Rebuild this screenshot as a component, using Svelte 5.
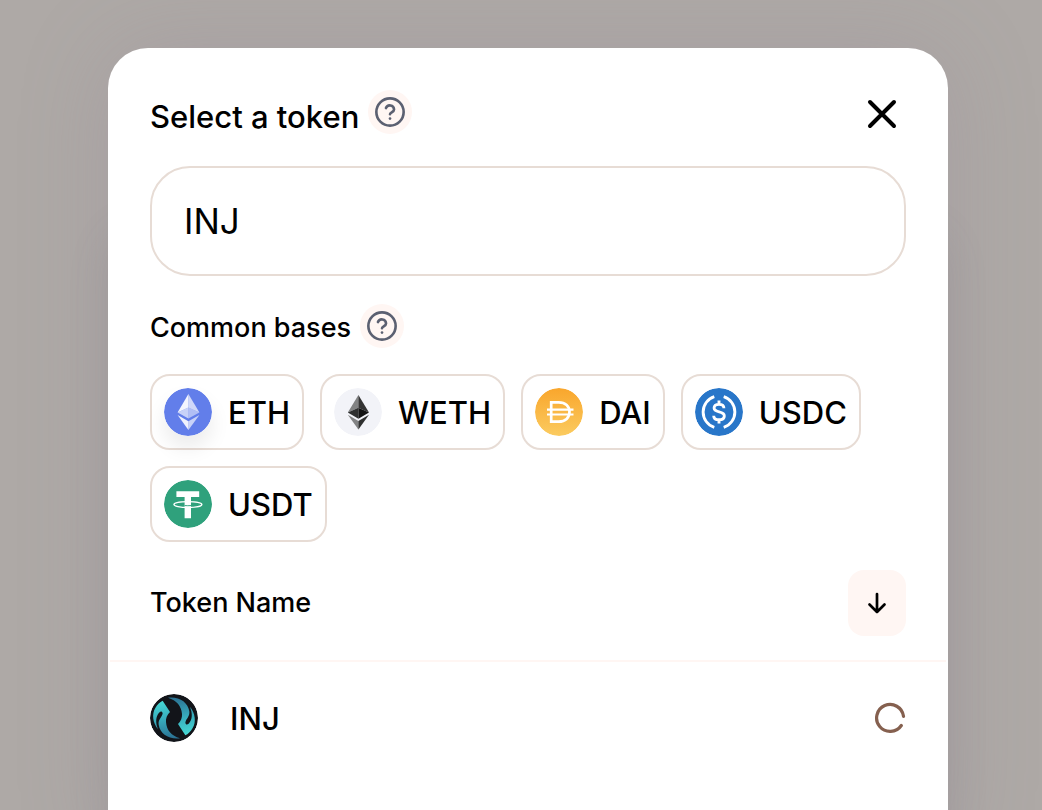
<script>
  let query = $state('INJ');
  const bases = ['ETH', 'WETH', 'DAI', 'USDC', 'USDT'];
</script>

{#snippet help(label)}
  <button class="help" type="button" aria-label={label}>
    <svg width="36" height="36" viewBox="0 0 24 24" fill="none" stroke="#5b6071" stroke-width="1.75" stroke-linecap="round" stroke-linejoin="round">
      <circle cx="12" cy="12" r="9.1" />
      <path d="M9.3 9.4a2.8 2.8 0 0 1 5.4.9c0 1.800-2.700 2-2.700 3.200" />
      <path d="M12 16.400h.01" />
    </svg>
  </button>
{/snippet}

{#snippet logo(name)}
  {#if name === 'ETH'}
    <svg class="coin shaded" viewBox="0 0 48 48" aria-hidden="true">
      <circle cx="24" cy="24" r="24" fill="#627eea" />
      <path d="M24.4 6 13.6 24.4 24.4 19.6z" fill="#fff" fill-opacity=".92" />
      <path d="M24.4 6 35.4 24.4 24.4 19.6z" fill="#fff" fill-opacity=".7" />
      <path d="M13.6 24.4 24.4 19.6V30.6z" fill="#fff" fill-opacity=".65" />
      <path d="M35.4 24.4 24.4 19.6V30.6z" fill="#fff" fill-opacity=".5" />
      <path d="M13.6 27 24.4 33.2V42z" fill="#fff" fill-opacity=".9" />
      <path d="M35.4 27 24.4 33.2V42z" fill="#fff" fill-opacity=".65" />
    </svg>
  {:else if name === 'WETH'}
    <svg class="coin" viewBox="0 0 48 48" aria-hidden="true">
      <circle cx="24" cy="24" r="24" fill="#f2f3f8" />
      <path d="M24.4 7 13.8 24.6 24.4 19.8z" fill="#828384" />
      <path d="M24.4 7 35 24.6 24.4 19.8z" fill="#343434" />
      <path d="M13.8 24.6 24.4 19.8V30.8z" fill="#2f3030" />
      <path d="M35 24.6 24.4 19.8V30.8z" fill="#131313" />
      <path d="M13.8 26.8 24.4 33V41.6z" fill="#828384" />
      <path d="M35 26.8 24.4 33V41.6z" fill="#2f3030" />
    </svg>
  {:else if name === 'DAI'}
    <svg class="coin" viewBox="0 0 48 48" aria-hidden="true">
      <defs>
        <linearGradient id="dai" x1="0" y1="0" x2="0" y2="1">
          <stop offset="0" stop-color="#f9a62c" />
          <stop offset="1" stop-color="#fbcb60" />
        </linearGradient>
      </defs>
      <circle cx="24" cy="24" r="24" fill="url(#dai)" />
      <path d="M16.200 14.300h7.500c6.800 0 10.800 4.100 10.800 9.700s-4 9.700-10.800 9.700H16.200z" fill="none" stroke="#fff" stroke-width="2.700" />
      <path d="M12 21.700h26.500 M12 26.500h26.500" fill="none" stroke="#fff" stroke-width="2.200" />
    </svg>
  {:else if name === 'USDC'}
    <svg class="coin" viewBox="0 0 48 48" aria-hidden="true">
      <circle cx="24" cy="24" r="24" fill="#2876c9" />
      <g fill="none" stroke="#fff" stroke-width="2.900">
        <path d="M19.300 8.600a16.200 16.200 0 0 0 0 30.800 M28.700 8.600a16.200 16.200 0 0 1 0 30.800" />
        <path d="M28.900 20.200c0-2.500-1.900-3.800-4.900-3.800s-4.900 1.500-4.900 3.700c0 5.200 10.200 2.500 10.200 7.800 0 2.400-2 3.900-5.300 3.900s-5.300-1.500-5.300-4.100 M24 12.600v4 M24 31.600v4" />
      </g>
    </svg>
  {:else if name === 'USDT'}
    <svg class="coin" viewBox="0 0 48 48" aria-hidden="true">
      <circle cx="24" cy="24" r="24" fill="#2fa17c" />
      <path d="M12.400 11.300h22.800v5.800h-8.200v21.200h-6.400V17.100h-8.200z" fill="#fff" />
      <path d="M20.600 25.600c1.800.2 4.600.2 6.400 0" fill="none" stroke="#2fa17c" stroke-width="1" />
      <ellipse cx="23.900" cy="24.500" rx="14" ry="2.900" fill="none" stroke="#fff" stroke-width="1.300" />
    </svg>
  {:else}
    <svg class="coin" viewBox="0 0 144 144" aria-hidden="true">
      <defs>
        <linearGradient id="inj" gradientUnits="userSpaceOnUse" x1="40" y1="20" x2="60" y2="132">
          <stop offset="0" stop-color="#46d8d4" />
          <stop offset=".5" stop-color="#37aabb" />
          <stop offset="1" stop-color="#2b7394" />
        </linearGradient>
        <path id="inj-half" d="M38 20 60 54C51 62 47 74 48 84 50 109 64 125 90 133 56 137 30 119 26 92 24 76 36 70 38 58 36 48 28 52 23 62 17 74 17 86 24 106 8 86 5 60 16 42 22 31 30 24 38 20z" />
      </defs>
      <circle cx="72" cy="72" r="72" fill="#121419" />
      <use href="#inj-half" fill="url(#inj)" />
      <use href="#inj-half" fill="url(#inj)" transform="rotate(180 72 72)" />
    </svg>
  {/if}
{/snippet}

<main class="backdrop">
  <div class="modal" role="dialog" aria-modal="true" aria-labelledby="title">
    <header class="bar">
      <div class="label">
        <h1 id="title">Select a token</h1>
        {@render help('About token selection')}
      </div>
      <button class="close" type="button" aria-label="Close">
        <svg width="48" height="48" viewBox="0 0 48 48" fill="none" stroke="#000" stroke-width="4" stroke-linecap="round">
          <path d="M12 12 36 36 M36 12 12 36" />
        </svg>
      </button>
    </header>

    <input class="search" type="text" aria-label="Search token" bind:value={query} />

    <div class="label bases-label">
      <h2>Common bases</h2>
      {@render help('About common bases')}
    </div>

    <div class="bases">
      {#each bases as name}
        <button class="chip" type="button">
          {@render logo(name)}
          <span>{name}</span>
        </button>
      {/each}
    </div>

    <div class="bar sort-bar">
      <h2>Token Name</h2>
      <button class="sort" type="button" aria-label="Sort by name">
        <svg width="28" height="28" viewBox="0 0 28 28" fill="none" stroke="#000" stroke-width="2.700" stroke-linecap="round" stroke-linejoin="round">
          <path d="M14 5v18 M6.500 15.500l7.500 7.500 7.500-7.500" />
        </svg>
      </button>
    </div>

    <ul class="tokens">
      <li>
        <button class="token" type="button">
          {@render logo('INJ')}
          <span>INJ</span>
          <svg class="spinner" width="32" height="32" viewBox="0 0 32 32" fill="none" stroke="#85604f" stroke-width="3.200" stroke-linecap="round" aria-hidden="true">
            <path d="M29.500 14.300A13.500 13.500 0 1 0 27.300 23.500" />
          </svg>
        </button>
      </li>
    </ul>
  </div>
</main>

<style>
  .backdrop {
    box-sizing: border-box;
    height: 100vh;
    overflow: hidden;
    display: flex;
    padding: 48px 94px 0 108px;
    background: #aea9a6;
    font-family: Inter, sans-serif;
    color: #000;
  }
  .modal {
    box-sizing: border-box;
    flex: 1;
    min-width: 0;
    min-height: 100vh;
    padding: 42px 2px;
    border-radius: 40px;
    background: #fff;
    box-shadow: 0 0 90px rgba(135, 125, 145, 0.22), 0 180px 40px rgba(100, 100, 115, 0.15);
  }
  h1, h2 {
    margin: 0;
    font-weight: 500;
  }
  h1 {
    font-size: 31px;
    line-height: 54px;
  }
  h2 {
    font-size: 27px;
    line-height: 48px;
  }
  button {
    font: inherit;
    color: inherit;
    border: 0;
    padding: 0;
    background: none;
    cursor: pointer;
  }
  svg {
    display: block;
    flex: none;
  }
  .bar {
    display: flex;
    align-items: center;
    justify-content: space-between;
    padding: 0 40px;
  }
  .label {
    display: flex;
    align-items: flex-start;
    gap: 9px;
    height: 48px;
  }
  .help {
    display: grid;
    place-items: center;
    width: 44px;
    height: 44px;
    border-radius: 50%;
    background: #fff6f3;
  }
  .search {
    display: block;
    box-sizing: border-box;
    width: calc(100% - 80px);
    height: 110px;
    margin: 28px 40px;
    padding: 0 32px;
    border: 2px solid #e7dcd5;
    border-radius: 40px;
    font: 400 35px Inter, sans-serif;
    color: #000;
    background: #fff;
    outline: 0;
  }
  .bases-label {
    padding: 0 40px;
  }
  .bases {
    display: flex;
    flex-wrap: wrap;
    gap: 16px;
    padding: 22px 40px 28px;
  }
  .chip {
    display: flex;
    align-items: center;
    gap: 16px;
    padding: 12px;
    border: 2px solid #e7dcd5;
    border-radius: 20px;
    font-size: 31px;
    line-height: 48px;
    font-weight: 500;
  }
  .chip span,
  .token span {
    padding-top: 2px;
    line-height: 46px;
  }
  .coin {
    width: 48px;
    height: 48px;
    border-radius: 50%;
  }
  .shaded {
    box-shadow: 0 12px 20px rgba(0, 0, 0, 0.08);
  }
  .sort-bar {
    padding-bottom: 24px;
    border-bottom: 2px solid #fff6f3;
  }
  .sort {
    display: grid;
    place-items: center;
    width: 58px;
    height: 66px;
    border-radius: 16px;
    background: #fff6f3;
  }
  .tokens {
    margin: 0;
    padding: 0;
    list-style: none;
  }
  .token {
    display: flex;
    align-items: center;
    gap: 32px;
    width: 100%;
    padding: 32px 40px;
    font-size: 31px;
    line-height: 48px;
    font-weight: 500;
  }
  .spinner {
    margin-left: auto;
  }
</style>
